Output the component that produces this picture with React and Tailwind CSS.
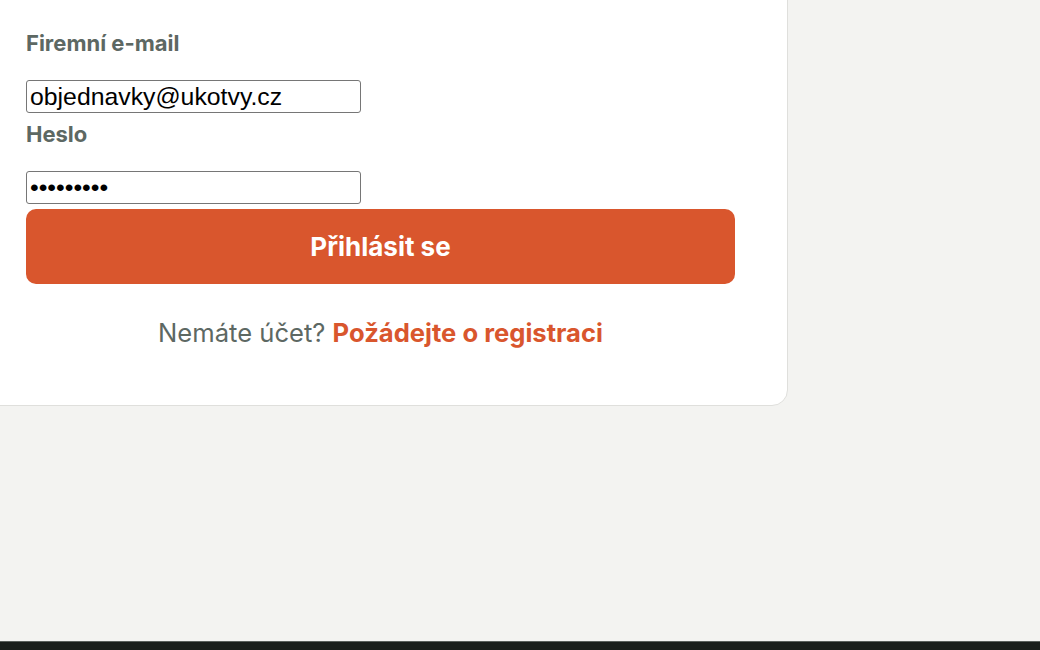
import React, { useState } from 'react';

const App = () => {
  const [email, setEmail] = useState('objednavky@ukotvy.cz');
  const [password, setPassword] = useState('123456789');

  return (
    <div className="flex h-screen flex-col overflow-hidden bg-[#f3f3f1] font-['Inter','Noto_Sans',sans-serif]">
      <main className="h-[641px] shrink-0">
        <div className="-ml-[27px] -mt-[25px] w-[815px] rounded-[16px] border border-[#dfdfdc] bg-white px-[52px] pt-[52px] pb-[56px]">
          <div className="flex flex-col gap-[6px]">
            <div>
              <label className="mb-[22px] block text-[22px] font-bold leading-[30px] text-[#5d6863]">
                Firemní e-mail
              </label>
              <input
                type="email"
                value={email}
                onChange={(e) => setEmail(e.target.value)}
                className="block h-[33px] w-[335px] rounded-[3px] border border-[#767676] px-[3px] font-['Liberation_Sans',Arial,sans-serif] text-[24.8px] text-black outline-none"
              />
            </div>
            <div>
              <label className="mb-[22px] block text-[22px] font-bold leading-[30px] text-[#5d6863]">
                Heslo
              </label>
              <input
                type="password"
                value={password}
                onChange={(e) => setPassword(e.target.value)}
                className="block h-[33px] w-[335px] rounded-[3px] border border-[#767676] px-[3px] font-['Liberation_Sans',Arial,sans-serif] text-[24.8px] text-black outline-none"
              />
            </div>
          </div>
          <button className="mt-[5px] flex h-[75px] w-full items-center justify-center rounded-[10px] bg-[#d9562d] text-[26px] font-bold text-white">
            Přihlásit se
          </button>
          <p className="mt-[33px] text-center text-[25.6px] leading-[32px] text-[#5d6863]">
            Nemáte účet?{' '}
            <a href="#" className="font-bold text-[#d9562d]">
              Požádejte o registraci
            </a>
          </p>
        </div>
      </main>
      <footer className="flex-1 border-t border-[#5a605c] bg-[#1a1f1c]" />
    </div>
  );
};

export default App;
